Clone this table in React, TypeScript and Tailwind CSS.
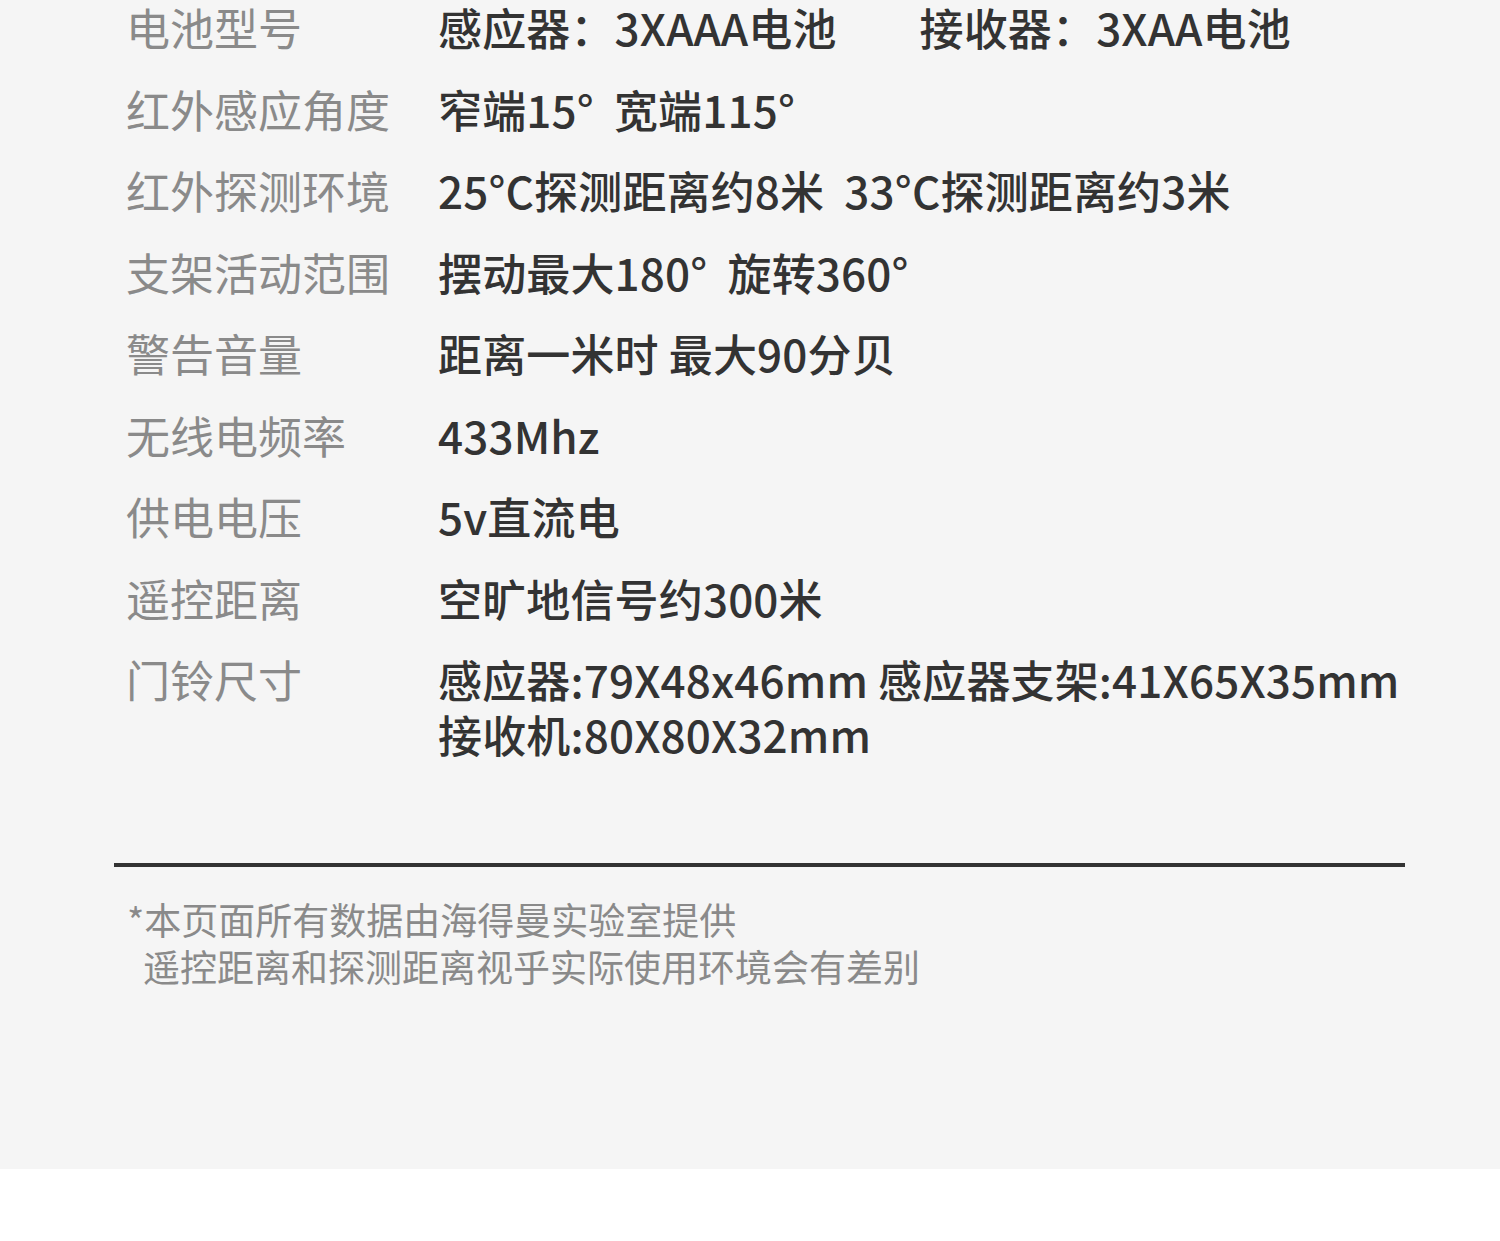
const specs: { label: string; value: React.ReactNode }[] = [
  {
    label: '电池型号',
    value: (
      <>
        <span>感应器：3XAAA电池</span>
        <span className="ml-[83px]">接收器：3XAA电池</span>
      </>
    ),
  },
  { label: '红外感应角度', value: '窄端15°  宽端115°' },
  { label: '红外探测环境', value: '25°C探测距离约8米  33°C探测距离约3米' },
  { label: '支架活动范围', value: '摆动最大180°  旋转360°' },
  { label: '警告音量', value: '距离一米时 最大90分贝' },
  { label: '无线电频率', value: '433Mhz' },
  { label: '供电电压', value: '5v直流电' },
  { label: '遥控距离', value: '空旷地信号约300米' },
  {
    label: '门铃尺寸',
    value: (
      <>
        感应器:79X48x46mm 感应器支架:41X65X35mm
        <br />
        接收机:80X80X32mm
      </>
    ),
  },
];

export default function App() {
  return (
    <div
      className="min-h-[1241px] w-[1500px] bg-white"
      style={{ fontFamily: '"Noto Sans CJK SC", "Noto Sans", sans-serif' }}
    >
      <div className="h-[1169px] bg-[#f5f5f5]">
        <div className="flex flex-col gap-y-[26.5px] pl-[126px]">
          {specs.map((s) => (
            <div key={s.label} className="flex text-[44px] leading-[55px]">
              <div className="w-[312px] shrink-0 text-[#8a8a8a]">{s.label}</div>
              <div className="whitespace-pre font-medium tracking-[0.15px] text-[#333333]">
                {s.value}
              </div>
            </div>
          ))}
        </div>

        <div className="ml-[114px] mt-[101px] h-[4px] w-[1291px] bg-[#333333]" />

        <div className="pl-[127px] pt-[29px] text-[37px] leading-[47px] text-[#8a8a8a]">
          <p>*本页面所有数据由海得曼实验室提供</p>
          <p className="pl-[16px]">遥控距离和探测距离视乎实际使用环境会有差别</p>
        </div>
      </div>
    </div>
  );
}
